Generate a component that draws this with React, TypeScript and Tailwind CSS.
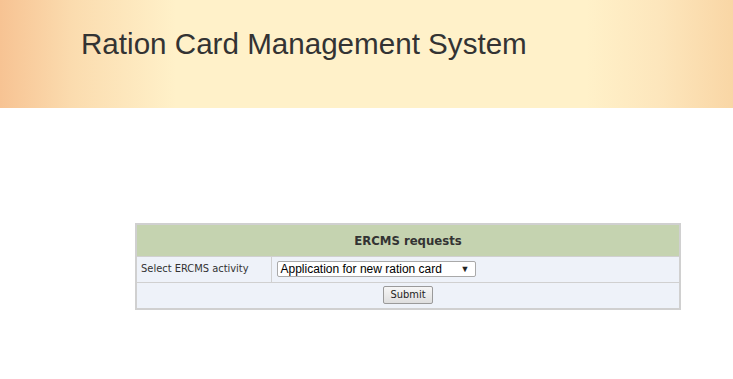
export default function App() {
  return (
    <div className="min-h-screen bg-white">
      <div className="h-[108px] bg-[linear-gradient(to_right,#f7c393_0%,#fbdcaf_10%,#fff1c9_24%,#fff1c9_80%,#fde6bc_90%,#f9d6a5_100%)] pl-[81px] pt-[26px]">
        <h1 className="text-[29.6px] leading-[36px] text-[#333] font-['Liberation_Sans',Arial,sans-serif]">
          Ration Card Management System
        </h1>
      </div>

      <div className="pt-[115px] pl-[135px]">
        <table className="w-[546px] border-collapse border-2 border-[#d0d0d0] font-['DejaVu_Sans_Condensed','DejaVu_Sans',sans-serif] text-[11px] text-[#333]">
          <tbody>
            <tr className="bg-[#c5d3b0] h-[32px]">
              <th colSpan={2} className="text-[13px] font-bold text-[#333] border border-[#d0d0d0]">
                ERCMS requests
              </th>
            </tr>
            <tr className="bg-[#eef2f9] h-[26px]">
              <td className="w-[135px] pl-[4px] border border-[#d0d0d0]">Select ERCMS activity</td>
              <td className="pl-[5px] border border-[#d0d0d0]">
                <div className="relative w-[199px] h-[16px] bg-white border border-[#a9a9a9] rounded-[2px] font-['Liberation_Sans',Arial,sans-serif] text-[12px] leading-[14px] text-black pl-[3px]">
                  Application for new ration card
                  <span className="absolute right-[5px] top-0 text-[9px] leading-[14px] text-[#222]">▼</span>
                </div>
              </td>
            </tr>
            <tr className="bg-[#eef2f9] h-[27px]">
              <td colSpan={2} className="text-center border border-[#d0d0d0]">
                <button
                  type="button"
                  className="w-[50px] h-[18px] bg-[linear-gradient(#f6f6f6,#dedede)] border border-[#9a9a9a] rounded-[2px] text-[11px] leading-[16px] text-[#222]"
                >
                  Submit
                </button>
              </td>
            </tr>
          </tbody>
        </table>
      </div>
    </div>
  );
}
